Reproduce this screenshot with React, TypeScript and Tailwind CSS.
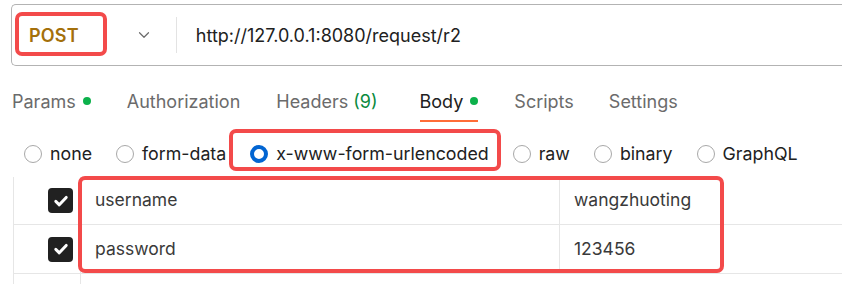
import { ChevronDown } from "lucide-react";

const tabs: { label: string; dot?: boolean; count?: string; active?: boolean; ml: string }[] = [
  { label: "Params", dot: true, ml: "ml-[12px]" },
  { label: "Authorization", ml: "ml-[36px]" },
  { label: "Headers", count: "(9)", ml: "ml-[36px]" },
  { label: "Body", dot: true, active: true, ml: "ml-[42px]" },
  { label: "Scripts", ml: "ml-[36px]" },
  { label: "Settings", ml: "ml-[35px]" },
];

const bodyTypes = ["none", "form-data", "x-www-form-urlencoded", "raw", "binary", "GraphQL"];

const rows = [
  { key: "username", value: "wangzhuoting" },
  { key: "password", value: "123456" },
];

function Check() {
  return (
    <div className="w-[25px] h-[25px] rounded-[4px] bg-[#212121] flex items-center justify-center">
      <svg width="16" height="16" viewBox="0 0 16 16" fill="none">
        <path d="M2.8 8.4 L6.3 11.8 L13.2 4.4" stroke="white" strokeWidth="3" strokeLinecap="round" strokeLinejoin="round" />
      </svg>
    </div>
  );
}

export default function App() {
  return (
    <div className="relative w-[842px] h-[284px] overflow-hidden bg-white text-[#212121]" style={{ fontFamily: "Inter, 'Noto Sans', sans-serif" }}>
      {/* url bar */}
      <div className="ml-[11px] mt-[4px] h-[62px] border border-r-0 border-[#b3b3b3] rounded-l-[5px] flex items-center">
        <span className="ml-[17px] text-[18px] font-semibold text-[#a4700b] tracking-[0.2px]">POST</span>
        <ChevronDown className="ml-[56px] text-[#6b6b6b]" size={18} strokeWidth={1.6} />
        <div className="ml-[23px] w-px h-[36px] bg-[#e3e3e3]" />
        <span className="ml-[19px] text-[18px]">http://127.0.0.1:8080/request/r2</span>
      </div>

      {/* tabs */}
      <div className="flex mt-[13px] h-[44px] items-stretch">
        {tabs.map((t) => (
          <div key={t.label} className={`${t.ml} relative flex items-center text-[18px] ${t.active ? "text-[#212121]" : "text-[#6b6b6b]"}`}>
            <span>{t.label}</span>
            {t.count && <span className="ml-[5px] text-[#0a8a3e]">{t.count}</span>}
            {t.dot && <span className="ml-[7px] w-[8px] h-[8px] rounded-full bg-[#0cb14b]" />}
            {t.active && <div className="absolute left-0 right-0 bottom-[1px] h-[2px] bg-[#ff6c37]" />}
          </div>
        ))}
      </div>

      {/* body types */}
      <div className="flex items-center mt-[21px] h-[20px] pl-[24px]">
        {bodyTypes.map((b) => {
          const on = b === "x-www-form-urlencoded";
          return (
            <div key={b} className="flex items-center mr-[24px] text-[17.8px]">
              <span
                className={`w-[18px] h-[18px] rounded-full ${on ? "border-[4px] border-[#0265d2]" : "border border-[#a8a8a8]"}`}
              />
              <span className="ml-[8px]">{b}</span>
            </div>
          );
        })}
      </div>

      {/* table */}
      <div className="mt-[13px] ml-[13px] border-l border-[#e6e6e6]">
        {rows.map((r, i) => (
          <div key={r.key} className={`flex ${i === 0 ? "h-[48px]" : "h-[49px]"} border-b border-[#e6e6e6]`}>
            <div className="w-[67px] flex items-center justify-end pr-[7px] border-r border-[#e6e6e6]">
              <Check />
            </div>
            <div className="w-[479px] flex items-center pl-[14px] border-r border-[#e6e6e6] text-[17.5px] text-[#3a3a3a]">{r.key}</div>
            <div className="flex-1 flex items-center pl-[14px] text-[17.5px] text-[#3a3a3a]">{r.value}</div>
          </div>
        ))}
        <div className="flex h-[20px]">
          <div className="w-[67px] border-r border-[#e6e6e6]" />
        </div>
      </div>

      {/* annotation boxes */}
      <div className="absolute left-[15px] top-[12px] w-[92px] h-[44px] border-[4px] border-[#f34a4a] rounded-[7px]" />
      <div className="absolute left-[229px] top-[129px] w-[272px] h-[42px] border-[4px] border-[#f34a4a] rounded-[7px]" />
      <div className="absolute left-[78px] top-[176px] w-[646px] h-[97px] border-[4px] border-[#f34a4a] rounded-[7px]" />
    </div>
  );
}
